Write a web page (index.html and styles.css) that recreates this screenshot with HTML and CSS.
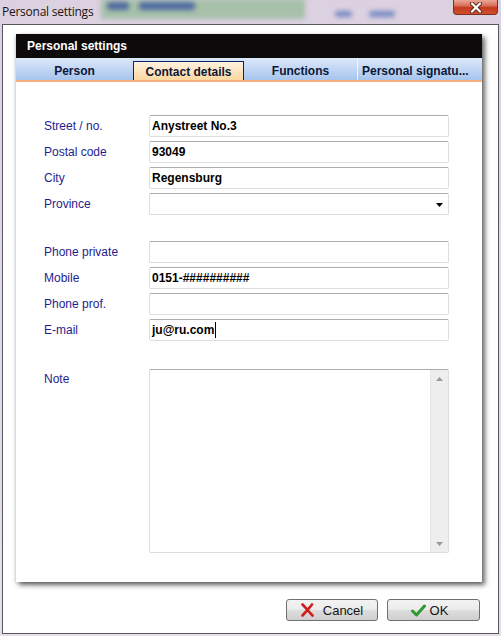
FILE: index.html
```html
<!DOCTYPE html>
<html lang="en">
<head>
    <meta charset="UTF-8">
    <title>Personal settings</title>
    <link rel="stylesheet" href="styles.css">
</head>
<body>
    <div class="window">
        <div class="titlebar">
            <span class="title">Personal settings</span>
            <div class="backdrop">
                <div class="backdrop-green">
                    <span class="blob blob-a"></span>
                    <span class="blob blob-b"></span>
                </div>
                <span class="blob blob-c"></span>
                <span class="blob blob-d"></span>
            </div>
            <div class="close-btn">
                <svg width="14" height="11" viewBox="0 0 14 11">
                    <path d="M3 1.5 L11 9.5 M11 1.5 L3 9.5" stroke="#5a2a22" stroke-width="4" stroke-linecap="round" fill="none"/>
                    <path d="M3 1.5 L11 9.5 M11 1.5 L3 9.5" stroke="#ffffff" stroke-width="2.2" stroke-linecap="round" fill="none"/>
                </svg>
            </div>
        </div>

        <div class="client">
            <div class="panel">
                <div class="panel-head">Personal settings</div>

                <div class="tabs">
                    <div class="tab tab-person">Person</div>
                    <div class="tab tab-contact active">Contact details</div>
                    <div class="tab tab-functions">Functions</div>
                    <div class="tab tab-signature">Personal signatu...</div>
                </div>

                <div class="form">
                    <div class="group">
                        <label>Street / no.</label>
                        <div class="field">Anystreet No.3</div>
                        <label>Postal code</label>
                        <div class="field">93049</div>
                        <label>City</label>
                        <div class="field">Regensburg</div>
                        <label>Province</label>
                        <div class="field select">
                            <svg class="arrow" width="7" height="4" viewBox="0 0 7 4"><path d="M0 0 H7 L3.5 4 Z" fill="#000"/></svg>
                        </div>
                    </div>

                    <div class="group">
                        <label>Phone private</label>
                        <div class="field"></div>
                        <label>Mobile</label>
                        <div class="field">0151-##########</div>
                        <label>Phone prof.</label>
                        <div class="field"></div>
                        <label>E-mail</label>
                        <div class="field">ju@ru.com<span class="caret"></span></div>
                    </div>

                    <div class="group note-group">
                        <label class="note-label">Note</label>
                        <div class="field note">
                            <div class="scrollbar">
                                <svg width="7" height="4" viewBox="0 0 7 4"><path d="M0 4 H7 L3.5 0 Z" fill="#9a9a9a"/></svg>
                                <svg width="7" height="4" viewBox="0 0 7 4"><path d="M0 0 H7 L3.5 4 Z" fill="#9a9a9a"/></svg>
                            </div>
                        </div>
                    </div>
                </div>
            </div>

            <div class="actions">
                <div class="btn btn-cancel">
                    <svg width="13" height="14" viewBox="0 0 13 14">
                        <path d="M1.5 1.5 C5 5 8 9 11.5 12.5 M11 1.5 C8 5 5 9 1.5 12.5" stroke="#d01c1c" stroke-width="2.6" stroke-linecap="round" fill="none"/>
                    </svg>
                    <span>Cancel</span>
                </div>
                <div class="btn btn-ok">
                    <svg width="15" height="13" viewBox="0 0 15 13">
                        <path d="M1.5 7 L5.5 11 L13.5 2" stroke="#2c9a2c" stroke-width="3" stroke-linecap="round" stroke-linejoin="round" fill="none"/>
                    </svg>
                    <span>OK</span>
                </div>
            </div>
        </div>
    </div>
</body>
</html>
```

FILE: styles.css
```css
body {
    margin: 0;
    font-family: 'Liberation Sans', Arial, sans-serif;
    font-size: 12px;
    background-color: #e3dae7;
}

.window {
    width: 501px;
    height: 636px;
    box-sizing: border-box;
    padding: 0 2px 2px 2px;
    background: linear-gradient(#dcd1e1, #e6dee9);
    display: flex;
    flex-direction: column;
}

/* title bar */

.titlebar {
    height: 24px;
    display: flex;
    align-items: flex-start;
    flex-shrink: 0;
}

.title {
    font-family: 'Open Sans', 'Noto Sans', sans-serif;
    font-size: 12px;
    color: #1e140e;
    padding: 3px 0 0 0;
    letter-spacing: -0.25px;
    white-space: nowrap;
}

.backdrop {
    flex: 1;
    height: 20px;
    display: flex;
    align-items: center;
    filter: blur(2.5px);
}

.backdrop-green {
    margin-left: 8px;
    width: 204px;
    height: 20px;
    margin-top: -2px;
    background: #a6c0a9;
    display: flex;
    align-items: flex-start;
    padding-top: 3px;
    box-sizing: border-box;
}

.blob {
    display: block;
    height: 8px;
    background: #4e68a0;
    border-radius: 3px;
}

.blob-a {
    width: 22px;
    margin-left: 6px;
}

.blob-b {
    width: 56px;
    margin-left: 10px;
}

.blob-c {
    width: 17px;
    height: 6px;
    margin: 8px 0 0 30px;
    background: #7488c0;
}

.blob-d {
    width: 26px;
    height: 6px;
    margin: 8px 0 0 17px;
    background: #7488c0;
}

.close-btn {
    width: 45px;
    height: 15px;
    margin-right: 1px;
    box-sizing: border-box;
    border: 1px solid #7c2d22;
    border-top: none;
    border-radius: 0 0 4px 4px;
    background: linear-gradient(#e9a896 0%, #d9705a 40%, #c3391f 55%, #d2502e 100%);
    display: flex;
    align-items: center;
    justify-content: center;
}

/* client area */

.client {
    flex: 1;
    background-color: #ffffff;
    border: 1px solid #5a5660;
    display: flex;
    flex-direction: column;
}

.panel {
    margin: 9px 0 0 13px;
    width: 466px;
    height: 548px;
    background-color: #ffffff;
    box-shadow: 3px 3px 5px rgba(0, 0, 0, 0.6), -1px 1px 3px rgba(0, 0, 0, 0.15);
    display: flex;
    flex-direction: column;
}

.panel-head {
    height: 24px;
    line-height: 24px;
    padding-left: 11px;
    background-color: #0d0a0b;
    color: #ffffff;
    font-weight: bold;
}

.tabs {
    height: 24px;
    box-sizing: border-box;
    display: flex;
    background: linear-gradient(#dce8f9, #a7c4ed);
    border-bottom: 2px solid #f7b07c;
}

.tab {
    box-sizing: border-box;
    display: flex;
    align-items: center;
    justify-content: center;
    padding-top: 4px;
    font-weight: bold;
    color: #0c1838;
    white-space: nowrap;
}

.tab-person { width: 117px; }
.tab-contact { width: 111px; }
.tab-functions { width: 113px; }

.tab-signature {
    width: 125px;
    justify-content: flex-start;
    padding-left: 4px;
    border-left: 1px solid #eef5ff;
}

.tab.active {
    margin-top: 3px;
    padding-top: 2px;
    background: linear-gradient(#fff3df, #fcd6a0);
    border: 1px solid #0d1f6e;
    border-bottom: none;
}

/* form */

.form {
    padding: 33px 0 0 28px;
}

.group {
    display: grid;
    grid-template-columns: 105px 300px;
    row-gap: 4px;
    align-items: center;
}

.group + .group {
    margin-top: 26px;
}

.group.note-group {
    margin-top: 28px;
}

label {
    color: #1e1e8e;
}

.note-label {
    align-self: start;
    padding-top: 3px;
}

.field {
    height: 22px;
    box-sizing: border-box;
    border: 1px solid #dedede;
    border-top-color: #acacac;
    border-radius: 2px;
    padding: 0 2px;
    display: flex;
    align-items: center;
    font-weight: bold;
    color: #000000;
}

.select {
    justify-content: flex-end;
    padding-right: 5px;
}

.arrow {
    margin-top: 2px;
}

.caret {
    display: inline-block;
    width: 1px;
    height: 16px;
    margin-left: 1px;
    background-color: #000000;
}

.note {
    height: 184px;
    align-items: stretch;
    justify-content: flex-end;
    padding: 0;
}

.scrollbar {
    width: 17px;
    background-color: #eeeeee;
    border-left: 1px solid #e6e6e6;
    display: flex;
    flex-direction: column;
    justify-content: space-between;
    align-items: center;
    padding: 7px 0 6px;
}

/* dialog buttons */

.actions {
    display: flex;
    justify-content: flex-end;
    gap: 9px;
    margin-top: 17px;
    padding-right: 18px;
}

.btn {
    height: 22px;
    box-sizing: border-box;
    border: 1px solid #707070;
    border-radius: 3px;
    background: linear-gradient(#f3f3f3 0%, #ebebeb 50%, #dddddd 51%, #cfcfcf 100%);
    display: flex;
    align-items: center;
    justify-content: center;
    color: #151515;
    font-size: 13px;
}

.btn-cancel {
    width: 92px;
    gap: 9px;
}

.btn-ok {
    width: 93px;
    gap: 4px;
    padding-right: 8px;
}
```
